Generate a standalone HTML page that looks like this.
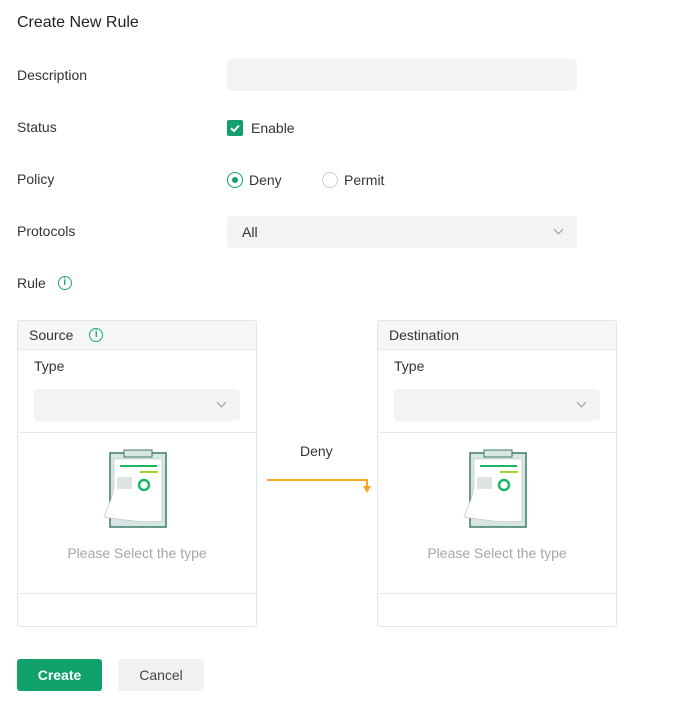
<!DOCTYPE html>
<html><head><style>
*{box-sizing:border-box;margin:0;padding:0}
body{width:682px;height:706px;background:#fff;font-family:"Liberation Sans",sans-serif;color:#333;font-size:14px;position:relative;overflow:hidden}
.a{position:absolute}
.lbl{left:17px;font-size:14px;color:#333}
.inp{background:#f3f3f3;border-radius:4px}
.panel{border:1px solid #e3e5e8;border-radius:3px;width:240px;height:307px;top:320px}
.ph{position:absolute;left:0;top:0;width:100%;height:29px;background:#f5f6f7;border-bottom:1px solid #e8e8e8;padding:6px 11px;font-size:14px}
.info{display:inline-block;width:14px;height:14px;border:1.3px solid #1fa870;border-radius:50%;color:#1fa870;font-size:10px;text-align:center;line-height:11px;font-weight:bold;position:relative;top:-1px;vertical-align:middle}
.chev{position:absolute;width:7px;height:7px;border-right:1.2px solid #999;border-bottom:1.2px solid #999;transform:rotate(45deg)}
</style></head><body>
<div class="a" style="left:17px;top:14px;font-size:16px;color:#222">Create New Rule</div>
<div class="a lbl" style="top:67px">Description</div>
<div class="a inp" style="left:227px;top:59px;width:350px;height:32px"></div>
<div class="a lbl" style="top:119px">Status</div>
<div class="a" style="left:227px;top:120px;width:16px;height:16px;background:#13a06c;border-radius:2px"><svg width="16" height="16"><path d="M4 8.3l3 2.7 5-5.5" stroke="#fff" stroke-width="2" fill="none"/></svg></div>
<div class="a" style="left:251px;top:120px">Enable</div>
<div class="a lbl" style="top:171px">Policy</div>
<div class="a" style="left:227px;top:172px;width:16px;height:16px;border:1.3px solid #13a06c;border-radius:50%"><div class="a" style="left:3.5px;top:3.5px;width:6.5px;height:6.5px;background:#13a06c;border-radius:50%"></div></div>
<div class="a" style="left:249px;top:172px">Deny</div>
<div class="a" style="left:322px;top:172px;width:16px;height:16px;border:1px solid #ccc;border-radius:50%"></div>
<div class="a" style="left:344px;top:172px">Permit</div>
<div class="a lbl" style="top:223px">Protocols</div>
<div class="a inp" style="left:227px;top:216px;width:350px;height:32px"><span class="a" style="left:15px;top:8px">All</span><div class="chev" style="left:328px;top:10px"></div></div>
<div class="a lbl" style="top:275px">Rule <span class="info" style="margin-left:8px">i</span></div>

<div class="a panel" style="left:17px">
<div class="ph">Source <span class="info" style="margin-left:12px">i</span></div>
<div class="a" style="left:16px;top:37px">Type</div>
<div class="a inp" style="left:16px;top:68px;width:206px;height:32px"><div class="chev" style="left:184px;top:10px"></div></div>
<div class="a" style="left:0;top:111px;width:100%;border-top:1px solid #e8e8e8"></div>
<svg class="a" style="left:84px;top:128px" width="70" height="82"><rect x="8" y="4" width="56" height="74" fill="#d8e6e2" stroke="#3d7a70" stroke-width="1.5"/><rect x="22" y="1" width="28" height="7" fill="#d8e6e2" stroke="#3d7a70"/><path d="M12 10h48v62c-15 2-30 0-44-2l-14-2c4-10 8-18 10-30z" fill="#fff" stroke="#bbb" stroke-width=".6"/><path d="M18 17h37" stroke="#18b868" stroke-width="2"/><path d="M38 23h18" stroke="#a6d42c" stroke-width="2"/><rect x="15" y="28" width="15" height="12" fill="#dde4e3"/><circle cx="42" cy="36" r="5" fill="none" stroke="#18b868" stroke-width="2.5"/></svg>
<div class="a" style="left:0;width:100%;top:224px;text-align:center;color:#a6a6a6">Please Select the type</div>
<div class="a" style="left:0;top:272px;width:100%;border-top:1px solid #e8e8e8"></div>
</div>

<div class="a" style="left:300px;top:443px">Deny</div>
<div class="a" style="left:267px;top:479px;width:100px;height:2px;background:#f5a623"></div>
<div class="a" style="left:366px;top:479px;width:2px;height:8px;background:#f5a623"></div>
<div class="a" style="left:363px;top:486px;width:0;height:0;border-left:4px solid transparent;border-right:4px solid transparent;border-top:7px solid #f5a623"></div>

<div class="a panel" style="left:377px">
<div class="ph">Destination</div>
<div class="a" style="left:16px;top:37px">Type</div>
<div class="a inp" style="left:16px;top:68px;width:206px;height:32px"><div class="chev" style="left:184px;top:10px"></div></div>
<div class="a" style="left:0;top:111px;width:100%;border-top:1px solid #e8e8e8"></div>
<svg class="a" style="left:84px;top:128px" width="70" height="82"><rect x="8" y="4" width="56" height="74" fill="#d8e6e2" stroke="#3d7a70" stroke-width="1.5"/><rect x="22" y="1" width="28" height="7" fill="#d8e6e2" stroke="#3d7a70"/><path d="M12 10h48v62c-15 2-30 0-44-2l-14-2c4-10 8-18 10-30z" fill="#fff" stroke="#bbb" stroke-width=".6"/><path d="M18 17h37" stroke="#18b868" stroke-width="2"/><path d="M38 23h18" stroke="#a6d42c" stroke-width="2"/><rect x="15" y="28" width="15" height="12" fill="#dde4e3"/><circle cx="42" cy="36" r="5" fill="none" stroke="#18b868" stroke-width="2.5"/></svg>
<div class="a" style="left:0;width:100%;top:224px;text-align:center;color:#a6a6a6">Please Select the type</div>
<div class="a" style="left:0;top:272px;width:100%;border-top:1px solid #e8e8e8"></div>
</div>

<div class="a" style="left:17px;top:659px;width:85px;height:32px;background:#0fa36b;border-radius:3px;color:#fff;font-weight:bold;text-align:center;line-height:32px">Create</div>
<div class="a" style="left:118px;top:659px;width:86px;height:32px;background:#f2f2f2;border-radius:3px;color:#444;text-align:center;line-height:32px">Cancel</div>
</body></html>
